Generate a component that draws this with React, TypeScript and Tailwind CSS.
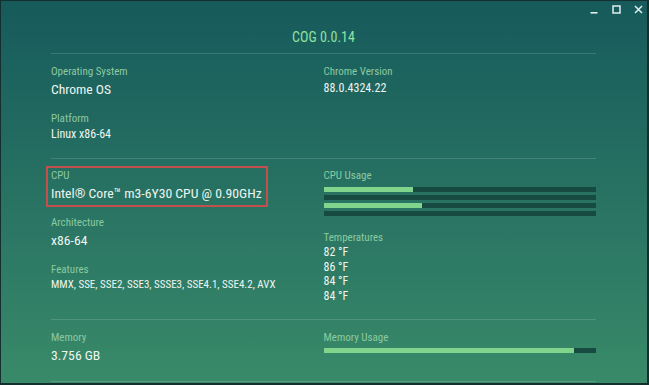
import React from 'react';

const FONT = { fontFamily: '"Liberation Sans Narrow", "Roboto Condensed", Roboto, sans-serif' };

function Label({ children }: { children: React.ReactNode }) {
  return <div className="text-[11px] leading-[14px] text-[#8ccaa0]">{children}</div>;
}

function Bar({ pct }: { pct: number }) {
  return (
    <div className="h-[5px] w-full bg-[#174a40]">
      <div className="h-full bg-[#80d48c]" style={{ width: `${pct}%` }} />
    </div>
  );
}

export default function App() {
  return (
    <div
      className="w-[649px] h-[385px] overflow-hidden border-l border-t border-r-2 border-b-2 border-[#14302e] bg-linear-to-b from-[#165a5b] to-[#398a69] text-[#eef5f0] relative font-stretch-condensed"
      style={FONT}
    >
      {/* window controls */}
      <div className="absolute right-[4px] top-[4px] flex items-center gap-[13px]">
        <svg width="9" height="9" viewBox="0 0 9 9"><rect x="0.5" y="7" width="7" height="1.6" fill="#dfeeee" /></svg>
        <svg width="9" height="9" viewBox="0 0 9 9"><rect x="1" y="1" width="7" height="7" fill="none" stroke="#dfeeee" strokeWidth="1.5" /></svg>
        <svg width="9" height="9" viewBox="0 0 9 9"><path d="M1 1 L8 8 M8 1 L1 8" stroke="#dfeeee" strokeWidth="1.5" /></svg>
      </div>

      <div className="pl-[50px] pr-[51px]">
        <div className="h-[52px] flex items-end justify-center pb-[7px]">
          <span className="text-[14px] leading-[18px] text-[#8fe2a3]">COG 0.0.14</span>
        </div>

        {/* system */}
        <div className="border-t border-white/15 grid grid-cols-2 pt-[11px] h-[105px]">
          <div>
            <Label>Operating System</Label>
            <div className="text-[13.6px] leading-[20px]">Chrome OS</div>
            <div className="mt-[13px]">
              <Label>Platform</Label>
              <div className="text-[12px] leading-[16px]">Linux x86-64</div>
            </div>
          </div>
          <div>
            <Label>Chrome Version</Label>
            <div className="text-[12px] leading-[18px]">88.0.4324.22</div>
          </div>
        </div>

        {/* cpu */}
        <div className="border-t border-white/15 grid grid-cols-2 pt-[10px] h-[161px]">
          <div className="relative">
            <div className="absolute left-[-5px] top-[-3px] w-[222px] h-[41px] border-2 border-[#c4504e]" />
            <Label>CPU</Label>
            <div className="text-[13.7px] leading-[20px]">Intel® Core™ m3-6Y30 CPU @ 0.90GHz</div>
            <div className="mt-[13px]">
              <Label>Architecture</Label>
              <div className="text-[13.7px] leading-[20px]">x86-64</div>
            </div>
            <div className="mt-[13px]">
              <Label>Features</Label>
              <div className="text-[11px] leading-[16px]">MMX, SSE, SSE2, SSE3, SSSE3, SSE4.1, SSE4.2, AVX</div>
            </div>
          </div>
          <div>
            <Label>CPU Usage</Label>
            <div className="mt-[4px] flex flex-col gap-[3px]">
              <Bar pct={33} />
              <Bar pct={0} />
              <Bar pct={36} />
              <Bar pct={0} />
            </div>
            <div className="mt-[15px]">
              <Label>Temperatures</Label>
              <div className="text-[12px] leading-[14.7px]">
                <div>82 °F</div>
                <div>86 °F</div>
                <div>84 °F</div>
                <div>84 °F</div>
              </div>
            </div>
          </div>
        </div>

        {/* memory */}
        <div className="border-t border-white/15 border-b grid grid-cols-2 pt-[11px] h-[63px]">
          <div>
            <Label>Memory</Label>
            <div className="text-[13.7px] leading-[20px]">3.756 GB</div>
          </div>
          <div>
            <Label>Memory Usage</Label>
            <div className="mt-[3px]">
              <Bar pct={92} />
            </div>
          </div>
        </div>
      </div>
    </div>
  );
}
